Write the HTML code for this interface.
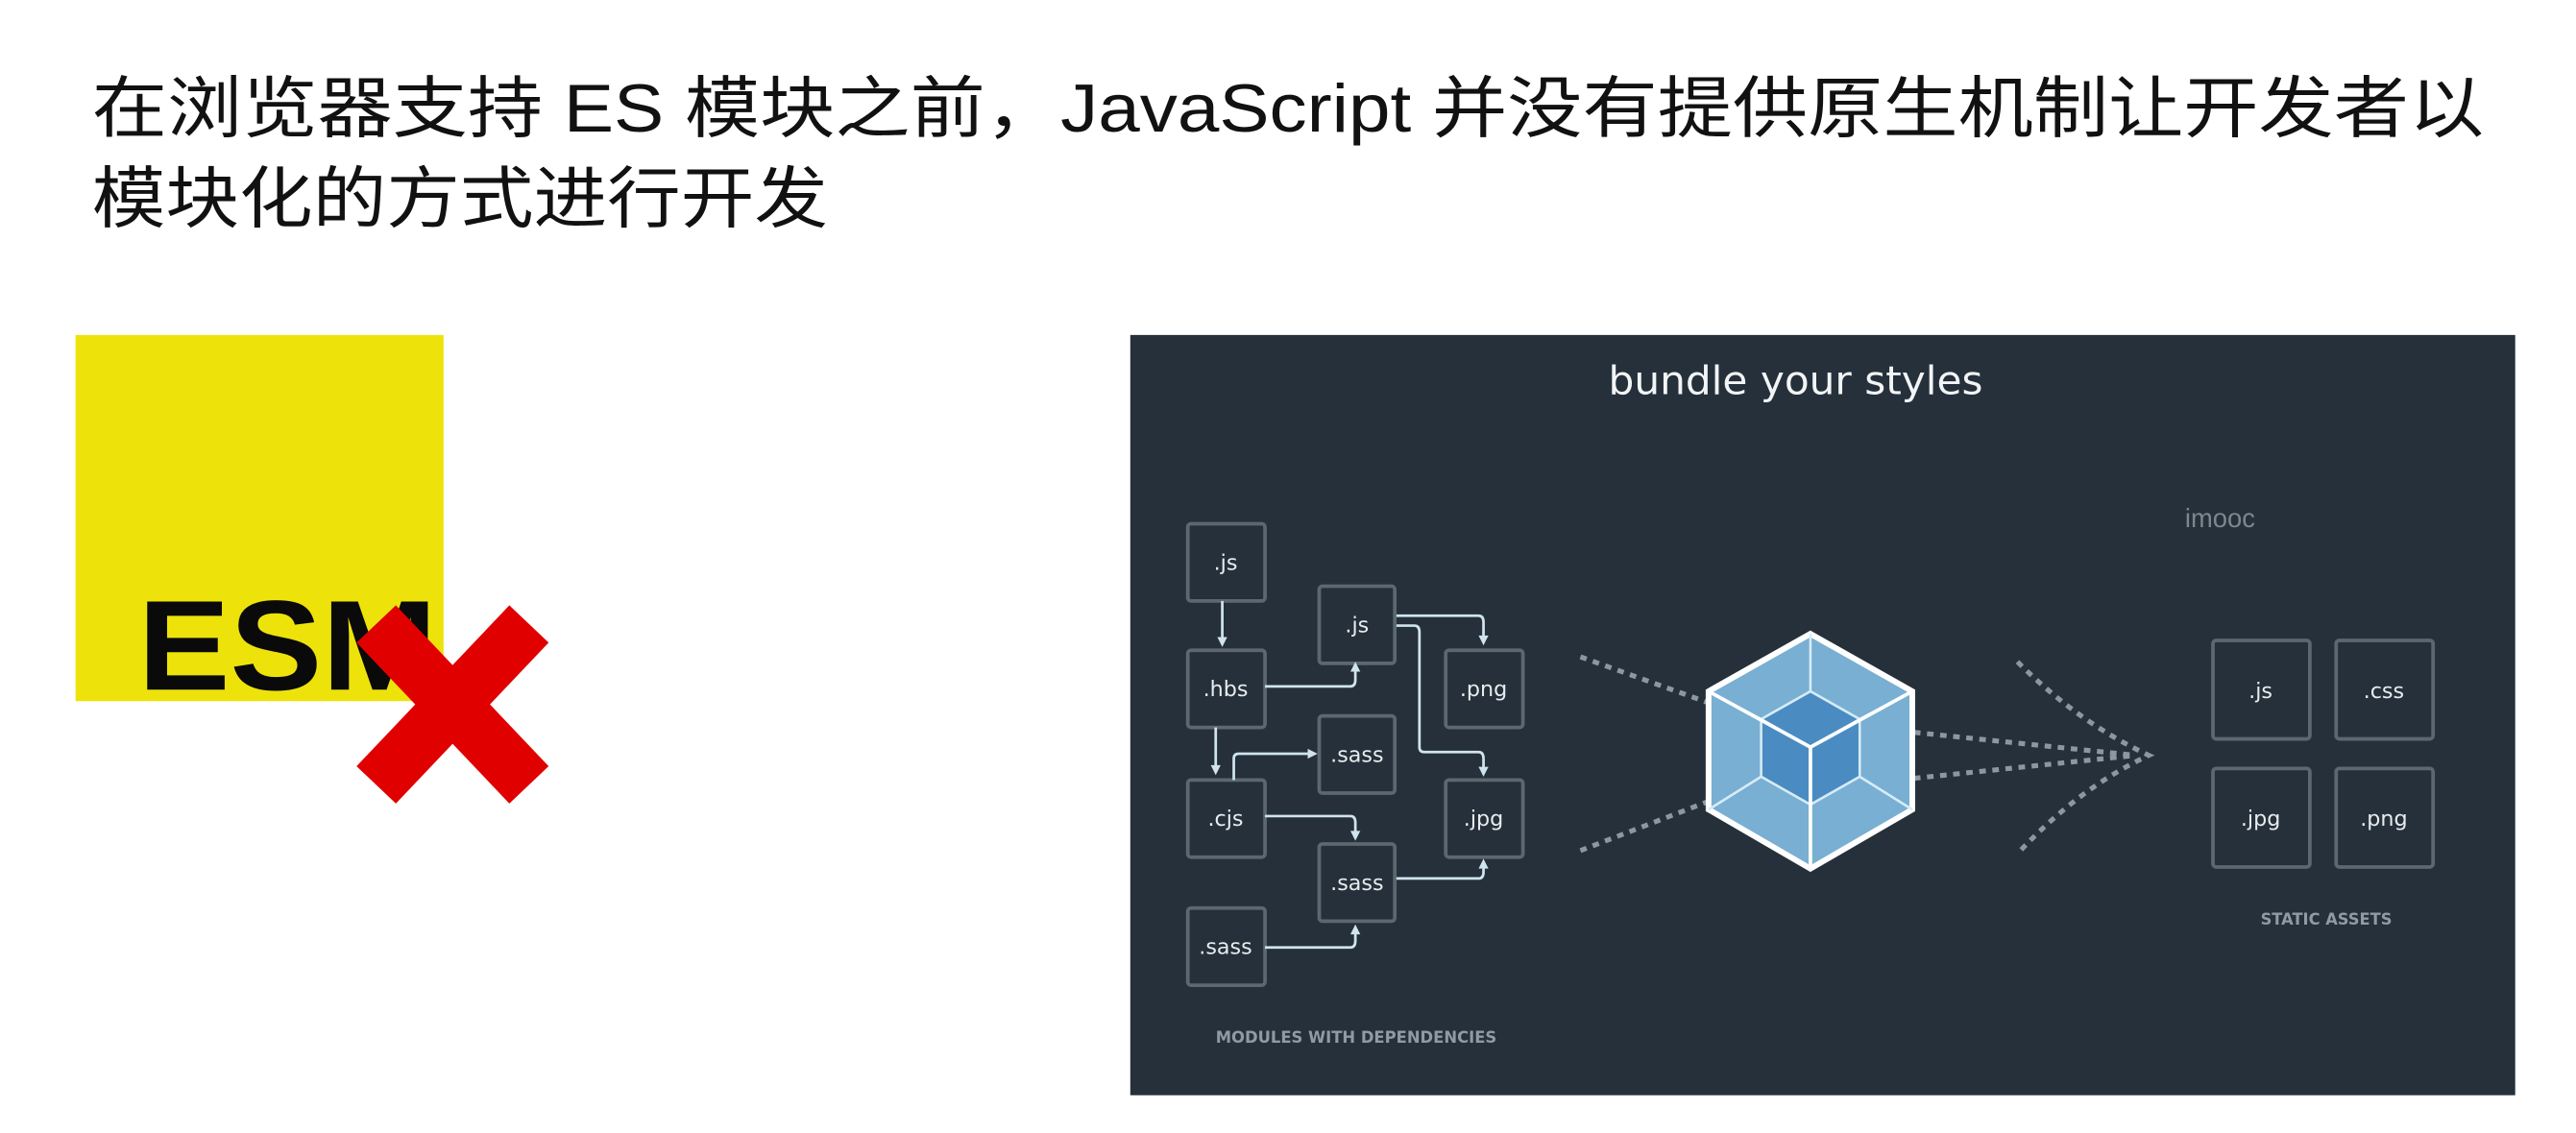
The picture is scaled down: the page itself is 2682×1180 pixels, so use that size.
<!DOCTYPE html>
<html><head><meta charset="utf-8"><style>
html,body{margin:0;padding:0;background:#fff;}
svg{display:block}
</style></head><body>
<svg width="2682" height="1180" viewBox="0 0 1568 690" xmlns="http://www.w3.org/2000/svg" preserveAspectRatio="none">
<rect width="1568" height="690" fill="#fff"/>
<g font-family="'Liberation Sans','Noto Sans CJK SC',sans-serif" font-size="41" fill="#111">
<text x="56" y="80" textLength="1456" lengthAdjust="spacingAndGlyphs">在浏览器支持 ES 模块之前，JavaScript 并没有提供原生机制让开发者以</text>
<text x="56" y="135" textLength="448" lengthAdjust="spacingAndGlyphs">模块化的方式进行开发</text>
</g>
<!-- ESM -->
<rect x="46" y="204" width="224" height="223" fill="#ede30b"/>
<text x="84" y="420" font-family="'Liberation Sans',sans-serif" font-weight="bold" font-size="78" fill="#0a0a0a" textLength="182" lengthAdjust="spacingAndGlyphs">ESM</text>
<g stroke="#e00000" stroke-width="33" stroke-linecap="butt">
<line x1="229" y1="380" x2="322" y2="478"/>
<line x1="322" y1="380" x2="229" y2="478"/>
</g>
<!-- panel -->
<rect x="688" y="204" width="843" height="463" fill="#25303a"/>
<text x="1093" y="240" text-anchor="middle" font-family="'DejaVu Sans',sans-serif" font-size="24" fill="#f2f4f6" textLength="228" lengthAdjust="spacingAndGlyphs">bundle your styles</text>
<text x="1330" y="321" font-family="'Liberation Sans',sans-serif" font-size="16" fill="#7d878f">imooc</text>
<g fill="none" stroke="#5d676f" stroke-width="2.2">
<rect x="723" y="319" width="47" height="47" rx="2"/>
<rect x="723" y="396" width="47" height="47" rx="2"/>
<rect x="723" y="475" width="47" height="47" rx="2"/>
<rect x="723" y="553" width="47" height="47" rx="2"/>
<rect x="803" y="357" width="46" height="47" rx="2"/>
<rect x="803" y="436" width="46" height="47" rx="2"/>
<rect x="803" y="514" width="46" height="47" rx="2"/>
<rect x="880" y="396" width="47" height="47" rx="2"/>
<rect x="880" y="475" width="47" height="47" rx="2"/>
<rect x="1347" y="390" width="59" height="60" rx="2"/>
<rect x="1422" y="390" width="59" height="60" rx="2"/>
<rect x="1347" y="468" width="59" height="60" rx="2"/>
<rect x="1422" y="468" width="59" height="60" rx="2"/>
</g>
<g font-family="'DejaVu Sans',sans-serif" font-size="13" fill="#e8ecef" text-anchor="middle">
<text x="746" y="347">.js</text><text x="746" y="424">.hbs</text><text x="746" y="503">.cjs</text><text x="746" y="581">.sass</text>
<text x="826" y="385">.js</text><text x="826" y="464">.sass</text><text x="826" y="542">.sass</text>
<text x="903" y="424">.png</text><text x="903" y="503">.jpg</text>
<text x="1376" y="425">.js</text><text x="1451" y="425">.css</text><text x="1376" y="503">.jpg</text><text x="1451" y="503">.png</text>
</g>
<g font-family="'DejaVu Sans',sans-serif" font-size="10" font-weight="bold" fill="#8e9aa4">
<text x="740" y="635" textLength="171" lengthAdjust="spacingAndGlyphs">MODULES WITH DEPENDENCIES</text>
<text x="1376" y="563" textLength="80" lengthAdjust="spacingAndGlyphs">STATIC ASSETS</text>
</g>
<!-- connectors -->
<g fill="none" stroke="#cfe4ee" stroke-width="1.6">
<path d="M744 366 V392"/>
<path d="M770 418 H822 Q825 418 825 414 V407"/>
<path d="M850 375 H900 Q903 375 903 379 V391"/>
<path d="M850 381 H861 Q864 381 864 385 V455 Q864 458 867 458 H900 Q903 458 903 462 V471"/>
<path d="M740 443 V470"/>
<path d="M751 475 V462 Q751 459 754 459 H798"/>
<path d="M770 497 H822 Q825 497 825 501 V510"/>
<path d="M850 535 H900 Q903 535 903 531 V526"/>
<path d="M770 577 H822 Q825 577 825 573 V566"/>
</g>
<g fill="#cfe4ee">
<path d="M741 388 L747 388 L744 394Z"/>
<path d="M822 409 L828 409 L825 403Z"/>
<path d="M900 387 L906 387 L903 393Z"/>
<path d="M900 467 L906 467 L903 473Z"/>
<path d="M737 466 L743 466 L740 472Z"/>
<path d="M796 456 L796 462 L802 459Z"/>
<path d="M822 506 L828 506 L825 512Z"/>
<path d="M900 529 L906 529 L903 523Z"/>
<path d="M822 569 L828 569 L825 563Z"/>
</g>
<!-- dashed lines -->
<g fill="none" stroke="#8c979f" stroke-width="3" stroke-dasharray="4 4">
<path d="M962 400 L1040 428"/>
<path d="M962 518 L1040 488"/>
<path d="M1165 446 L1300 460"/>
<path d="M1165 474 L1300 460"/>
<path d="M1228 403 Q1265 440 1308 460 Q1265 480 1228 520"/>
</g>
<!-- cube -->
<polygon points="1102,386 1164,421 1164,493 1102,529 1040,493 1040,421" fill="#79afd2" stroke="#fff" stroke-width="3.5"/>
<polygon points="1102,421 1132,438 1132,473 1102,490 1072,473 1072,438" fill="#4a8cc2"/>
<g stroke="#d7ecf7" stroke-width="1.5" fill="none">
<path d="M1102,386 V421 M1164,421 L1132,438 M1164,493 L1132,473 M1102,529 V490 M1040,493 L1072,473 M1040,421 L1072,438"/>
<path d="M1072,438 L1102,455 L1132,438 M1102,455 V490"/>
<path d="M1072,438 L1102,421 L1132,438 L1132,473 L1102,490 L1072,473Z"/>
</g>
<g stroke="#fff" stroke-width="2.2" fill="none">
<path d="M1040,421 L1102,455 L1164,421 M1102,455 V529"/>
</g>
</svg>
</body></html>
